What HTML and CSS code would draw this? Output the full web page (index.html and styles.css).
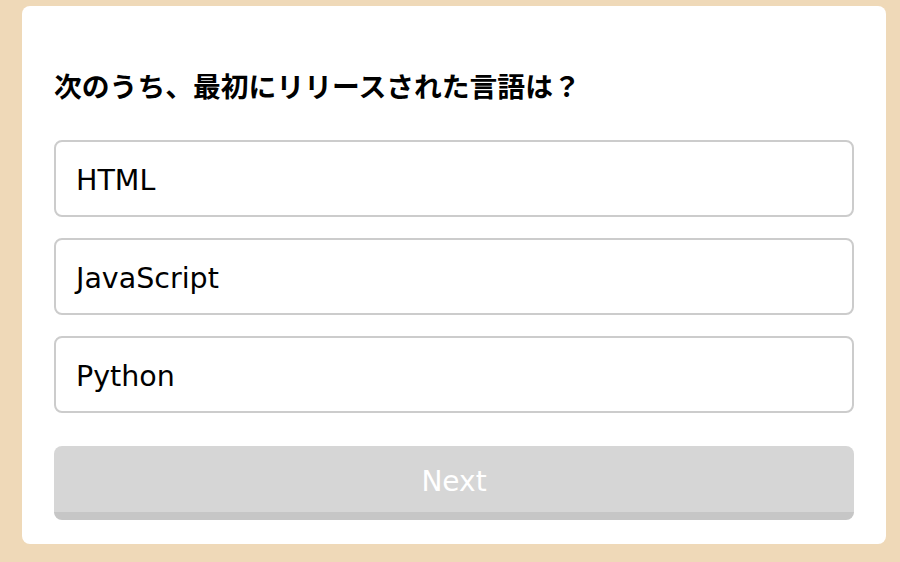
FILE: index.html
```html
<!DOCTYPE html>
<html lang="ja">
<head>
<meta charset="utf-8">
<link rel="stylesheet" href="styles.css">
</head>
<body>
<main class="card">
  <h2 class="question">次のうち、最初にリリースされた言語は？</h2>
  <ul class="options">
    <li class="option">HTML</li>
    <li class="option">JavaScript</li>
    <li class="option">Python</li>
  </ul>
  <button class="next" disabled>Next</button>
</main>
</body>
</html>
```
FILE: styles.css
```css
html, body {
  margin: 0;
  padding: 0;
}
body {
  background: #efd9b8;
  font-family: "DejaVu Sans", "Noto Sans CJK JP", sans-serif;
  padding: 6px 14px 0 22px;
  height: 562px;
  box-sizing: border-box;
  overflow: hidden;
}
.card {
  background: #ffffff;
  border-radius: 8px;
  padding: 32px 32px 24px 32px;
  display: flex;
  flex-direction: column;
}
.question {
  font-family: "Noto Sans CJK JP", sans-serif;
  font-weight: 700;
  font-size: 27.8px;
  line-height: 40px;
  margin: 27px 0 35px 0;
  color: #000;
}
.options {
  list-style: none;
  margin: 0;
  padding: 0;
  display: flex;
  flex-direction: column;
  gap: 21px;
}
.option {
  border: 2px solid #cccccc;
  border-radius: 8px;
  height: 73px;
  padding: 4px 20px 0 20px;
  box-sizing: content-box;
  height: 69px;
  display: flex;
  align-items: center;
  font-size: 28.5px;
  color: #000;
}
.next {
  margin-top: 33px;
  height: 74px;
  border: none;
  border-bottom: 8px solid #c6c6c6;
  border-radius: 8px;
  background: #d6d6d6;
  color: #ffffff;
  font-family: "DejaVu Sans", sans-serif;
  font-size: 28px;
  padding: 4px 0 0 0;
}
```
